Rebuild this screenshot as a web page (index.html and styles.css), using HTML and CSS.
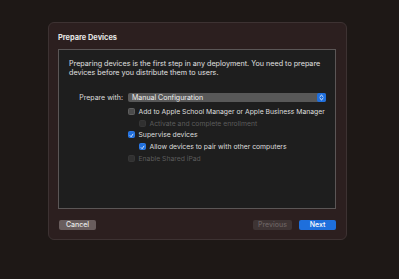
FILE: index.html
```html
<!DOCTYPE html>
<html>
<head>
<meta charset="utf-8">
<link rel="stylesheet" href="styles.css">
</head>
<body>
<div class="dialog">
  <div class="title">Prepare Devices</div>
  <div class="panel">
    <p class="intro">Preparing devices is the first step in any deployment. You need to prepare devices before you distribute them to users.</p>
    <div class="form">
      <div class="label">Prepare with:</div>
      <div class="popup">
        <span>Manual Configuration</span>
        <span class="stepper"><svg width="5" height="7" viewBox="0 0 5 7"><path d="M1 2.6 L2.5 1.2 L4 2.6 M1 4.4 L2.5 5.8 L4 4.4" fill="none" stroke="#fff" stroke-width="0.9" stroke-linecap="round" stroke-linejoin="round"/></svg></span>
      </div>
      <div></div>
      <div class="checks">
        <div class="row"><span class="cb"></span>Add to Apple School Manager or Apple Business Manager</div>
        <div class="row sub disabled"><span class="cb"></span>Activate and complete enrollment</div>
        <div class="row"><span class="cb on"><svg width="7" height="7" viewBox="0 0 7 7"><path d="M1.6 3.7 L3 5.2 L5.5 1.6" fill="none" stroke="#fff" stroke-width="1.1" stroke-linecap="round" stroke-linejoin="round"/></svg></span>Supervise devices</div>
        <div class="row sub"><span class="cb on"><svg width="7" height="7" viewBox="0 0 7 7"><path d="M1.6 3.7 L3 5.2 L5.5 1.6" fill="none" stroke="#fff" stroke-width="1.1" stroke-linecap="round" stroke-linejoin="round"/></svg></span>Allow devices to pair with other computers</div>
        <div class="row disabled"><span class="cb"></span>Enable Shared iPad</div>
      </div>
    </div>
  </div>
  <div class="buttons">
    <button class="btn cancel">Cancel</button>
    <div class="spacer"></div>
    <button class="btn prev">Previous</button>
    <button class="btn next">Next</button>
  </div>
</div>
</body>
</html>
```
FILE: styles.css
```css
html, body {
  margin: 0;
  height: 100%;
}
body {
  background: #1e1816;
  font-family: Inter, "Noto Sans", sans-serif;
  font-size: 7.2px;
  color: #dedede;
  padding: 22px 0 0 48px;
  box-sizing: border-box;
}
.dialog {
  width: 299px;
  height: 218px;
  box-sizing: border-box;
  background: #2c1f1f;
  border: 1px solid #3d3232;
  border-radius: 6px;
  padding: 9px 10px 9px 9px;
  display: flex;
  flex-direction: column;
}
.title {
  font-weight: 700;
  font-size: 7.4px;
  line-height: 10px;
  height: 16px;
  color: #e6e6e6;
  padding-top: 1px;
}
.panel {
  height: 161px;
  box-sizing: border-box;
  background: #1e1e1e;
  border: 1px solid #5b5656;
  padding: 10px 10px 0 10px;
}
.intro {
  margin: 0;
  line-height: 8.7px;
  color: #e0e0e0;
}
.form {
  margin-top: 15.5px;
  display: grid;
  grid-template-columns: 54px 198px;
  column-gap: 5px;
  align-items: center;
}
.label {
  text-align: right;
  line-height: 9px;
  font-size: 7px;
}
.popup {
  height: 9px;
  background: #585858;
  border-radius: 2px;
  display: flex;
  align-items: center;
  justify-content: space-between;
  padding-left: 4px;
  box-sizing: border-box;
  color: #f0f0f0;
  font-size: 7px;
}
.stepper {
  width: 9px;
  height: 9px;
  background: #1f6fdd;
  border-radius: 2px;
  display: flex;
  align-items: center;
  justify-content: center;
}
.checks {
  padding-top: 3.8px;
}
.row {
  height: 11.75px;
  display: flex;
  align-items: center;
  gap: 3.5px;
  white-space: nowrap;
  font-size: 6.8px;
}
.row.sub {
  padding-left: 11px;
}
.row.disabled {
  color: #5c5c5c;
}
.cb {
  width: 7px;
  height: 7px;
  box-sizing: border-box;
  border-radius: 1.5px;
  background: #4b4b4b;
  border: 0.5px solid #5e5e5e;
  flex: none;
  display: flex;
}
.row.disabled .cb {
  background: #303030;
  border-color: #363636;
}
.cb.on {
  background: #1f6fdd;
  border-color: #2b78e4;
}
.buttons {
  margin-top: 11px;
  display: flex;
  gap: 7px;
}
.spacer {
  flex: 1;
}
.btn {
  height: 10px;
  border: none;
  border-radius: 2px;
  padding: 0;
  font-family: inherit;
  font-size: 7px;
  line-height: 10px;
  color: #e8e8e8;
  font-weight: 500;
}
.cancel {
  width: 37px;
  background: #695d5d;
  margin-left: 1px;
}
.prev {
  width: 39px;
  background: #3e3434;
  color: #6b6262;
}
.next {
  width: 37px;
  background: #1e6fdc;
  color: #fff;
}
```
